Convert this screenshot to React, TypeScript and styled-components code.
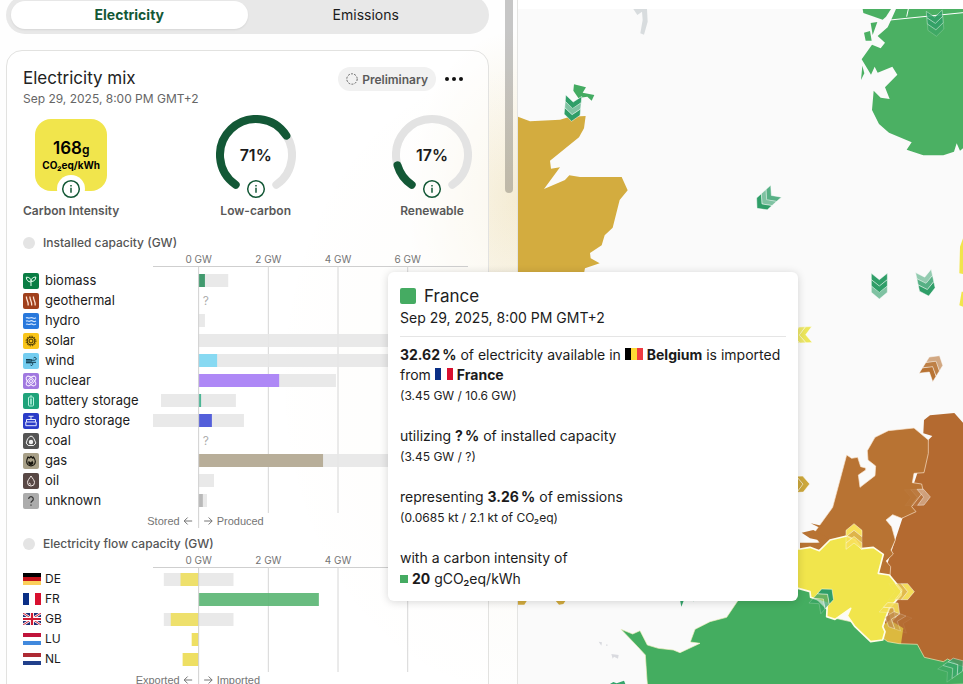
import React, { useState } from "react";
import styled, { createGlobalStyle } from "styled-components";

const GlobalStyle = createGlobalStyle`
  * { box-sizing: border-box; }
  body {
    margin: 0;
    background: #fff;
    color: #1b1b1b;
    font-family: Inter, "Liberation Sans", sans-serif;
    font-size: 14px;
  }
  button { font: inherit; color: inherit; border: 0; padding: 0; background: none; cursor: pointer; }
  p, h1, h2, ul { margin: 0; padding: 0; }
`;

const GREEN = "#135836";

/* ---------- layout ---------- */

const Page = styled.div`
  display: flex;
  height: 100vh;
  overflow: hidden;
`;

const Panel = styled.aside`
  flex: none;
  width: clamp(360px, 54vw, 518px);
  display: flex;
  border-right: 1px solid #e4e4e2;
  padding-right: 4px;
  background:
    radial-gradient(110px 170px at 100% 200px, rgba(211, 172, 63, 0.2), rgba(211, 172, 63, 0)),
    radial-gradient(240px 320px at 100% 380px, rgba(211, 172, 63, 0.06), rgba(211, 172, 63, 0)),
    #fefefe;
`;

const PanelContent = styled.div`
  flex: 1;
  min-width: 0;
  display: flex;
  flex-direction: column;
  gap: 16px;
  margin-top: -4px;
  padding: 0 16px 0 6px;
`;

const ScrollThumb = styled.div`
  flex: none;
  width: 8px;
  height: 193px;
  border-radius: 0 0 4px 4px;
  background: rgba(0, 0, 0, 0.22);
`;

const Tabs = styled.div`
  flex: none;
  display: grid;
  grid-template-columns: 1fr 1fr;
  padding: 5px;
  border-radius: 19px;
  background: #e8e8e8;
`;

const Tab = styled.button<{ $active: boolean }>`
  height: 28px;
  padding-bottom: 2px;
  border-radius: 14px;
  font-size: 14px;
  font-weight: ${(p) => (p.$active ? 700 : 400)};
  color: ${(p) => (p.$active ? GREEN : "#1b1b1b")};
  background: ${(p) => (p.$active ? "#fff" : "transparent")};
  box-shadow: ${(p) => (p.$active ? "0 1px 2px rgba(0, 0, 0, 0.08)" : "none")};
`;

const Card = styled.section`
  flex: none;
  padding: 16px;
  border: 1px solid #e2e2e0;
  border-radius: 16px;
  background: rgba(255, 255, 255, 0.6);
`;

const CardHeader = styled.header`
  display: flex;
  align-items: center;
`;

const CardTitle = styled.h1`
  flex: 1;
  padding-bottom: 2px;
  font-size: 17px;
  line-height: 22px;
  font-weight: 400;
  color: #222;
`;

const Status = styled.span`
  display: flex;
  align-items: center;
  gap: 4px;
  height: 24px;
  padding: 0 8px;
  border-radius: 12px;
  background: #f1f1f1;
  color: #5a5a5a;
  font-size: 12px;
  font-weight: 600;
`;

const MoreButton = styled.button`
  display: grid;
  place-items: center;
  width: 36px;
  height: 24px;
`;

const CardDate = styled.p`
  font-size: 12px;
  line-height: 16px;
  color: #666;
`;

/* ---------- gauges ---------- */

const Metrics = styled.div`
  display: flex;
  justify-content: space-between;
  margin-top: 8px;
`;

const Metric = styled.div`
  display: flex;
  flex-direction: column;
  align-items: center;
  gap: 8px;
`;

const Dial = styled.div`
  display: grid;
  place-items: center;
  width: 80px;
  height: 80px;
  > * { grid-area: 1 / 1; }
`;

const DialValue = styled.span`
  font-size: 16px;
  font-weight: 600;
`;

const IntensitySquare = styled.div`
  display: flex;
  flex-direction: column;
  align-items: center;
  justify-content: center;
  width: 72px;
  height: 72px;
  border-radius: 16px;
  background: #f1e54c;
  color: #000;
  font-size: 10px;
  line-height: 12px;
  font-weight: 700;
  white-space: nowrap;
`;

const IntensityValue = styled.span`
  font-size: 17px;
  line-height: 18px;
  font-weight: 600;
  small { font-size: 12px; }
`;

const InfoButton = styled.button<{ $ring?: boolean }>`
  align-self: end;
  display: grid;
  place-items: center;
  width: 28px;
  height: 28px;
  margin-bottom: -8px;
  border-radius: 50%;
  background: ${(p) => (p.$ring ? "#fff" : "transparent")};
`;

const MetricLabel = styled.span`
  font-size: 12px;
  line-height: 16px;
  font-weight: 600;
  color: #585858;
  white-space: nowrap;
  text-align: center;
`;

const MetricLabelSlot = styled(MetricLabel)`
  display: flex;
  justify-content: center;
  width: 80px;
`;

/* ---------- charts ---------- */

const ChartHeading = styled.h2<{ $gap: number }>`
  display: flex;
  align-items: center;
  gap: 8px;
  margin-top: ${(p) => p.$gap}px;
  font-size: 12px;
  line-height: 16px;
  font-weight: 500;
  color: #555;
`;

const Dot = styled.span`
  width: 12px;
  height: 12px;
  border-radius: 50%;
  background: #e4e4e4;
`;

const ChartBody = styled.div`
  display: grid;
  grid-template-columns: 130px minmax(0, 1fr);
  padding-right: 4px;
`;

const RowLabels = styled.ul<{ $top: number }>`
  padding-top: ${(p) => p.$top}px;
  list-style: none;
`;

const RowLabel = styled.li<{ $flag: boolean }>`
  display: flex;
  align-items: center;
  gap: ${(p) => (p.$flag ? 4 : 6)}px;
  height: 20px;
  font-size: ${(p) => (p.$flag ? 12 : 13)}px;
  line-height: 18px;
  white-space: nowrap;
`;

const RowText = styled.span`
  padding-bottom: 2px;
`;

const Plot = styled.svg`
  display: block;
  width: 100%;
  overflow: visible;
  fill: #757575;
  font-size: 10px;
`;

const Direction = styled.text`
  font-family: "Liberation Sans", sans-serif;
  font-size: 11px;
`;

const FlagBox = styled.svg<{ $inline?: boolean }>`
  flex: none;
  width: 18px;
  height: 12px;
  ${(p) => (p.$inline ? "margin-right: 4px;" : "margin-bottom: 3px;")}
`;

/* ---------- map + tooltip ---------- */

const MapArea = styled.main`
  flex: 1;
  min-width: 0;
  margin-top: 9px;
  background: #fafafa;
`;

const MapSvg = styled.svg`
  display: block;
  width: 100%;
  height: 100%;
`;

const Tooltip = styled.div`
  position: absolute;
  left: 388px;
  top: 272px;
  width: 410px;
  padding: 12px;
  border-radius: 6px;
  background: #fff;
  box-shadow: 0 1px 8px rgba(0, 0, 0, 0.16);
  line-height: 20px;
`;

const TooltipTitle = styled.h2`
  display: flex;
  align-items: center;
  gap: 8px;
  font-size: 17px;
  line-height: 24px;
  font-weight: 400;
  color: #222;
`;

const Swatch = styled.span<{ $size: number }>`
  display: inline-block;
  width: ${(p) => p.$size}px;
  height: ${(p) => p.$size}px;
  border-radius: ${(p) => (p.$size > 10 ? 2 : 0)}px;
  background: #45ab62;
`;

const Divider = styled.hr`
  margin: 8px 0;
  border: 0;
  border-top: 1px solid #e5e5e5;
`;

const Detail = styled.p`
  margin-bottom: 20px;
  font-size: 12px;
  line-height: 21px;
  color: #222;
`;

const IntensityLine = styled.p`
  display: flex;
  align-items: center;
  gap: 4px;
  line-height: 21px;
`;

/* ---------- icons ---------- */

type IconName =
  | "biomass" | "geothermal" | "hydro" | "solar" | "wind" | "nuclear"
  | "battery" | "dam" | "coal" | "gas" | "oil" | "unknown";

const iconArt: Record<IconName, { bg: string; fg: string; art: React.ReactNode }> = {
  biomass: {
    bg: "#0a7d44", fg: "#e9fff2",
    art: <path d="M8 13V8.5M8 9C5 9 3.3 7 3.3 4.2 6.2 4 8 5.7 8 8M8 8.5C8 5.7 10 4 12.8 4 12.8 7 11 8.5 8 8.5" />,
  },
  geothermal: {
    bg: "#a0401c", fg: "#ffe3d3",
    art: <path d="M3.5 3.500C2.8 6 5.7 8 5.2 12.500M7 3.500C6.3 6 9.2 8 8.7 12.500M10.500 3.500C9.800 6 12.700 8 12.200 12.500" strokeWidth="1.300" />,
  },
  hydro: {
    bg: "#2878dc", fg: "#cfe4ff",
    art: <path d="M3 5C4.300 3.800 5.300 5.600 6.600 5S9 4.300 10 5s2 .3 3-.3M3 8.200C4.300 7 5.300 8.800 6.600 8.200s2.400-.7 3.400 0 2 .3 3-.3M3 11.400c1.300-1.200 2.300.6 3.600 0s2.400-.7 3.400 0 2 .3 3-.3" strokeWidth="1.200" />,
  },
  solar: {
    bg: "#f9c51b", fg: "#3a2c00",
    art: (
      <>
        <circle cx="8" cy="8" r="2" />
        <circle cx="8" cy="8" r="3.900" />
        <circle cx="8" cy="8" r="4.900" strokeDasharray="1.300 1.265" />
      </>
    ),
  },
  wind: {
    bg: "#74cdf0", fg: "#123a4b",
    art: (
      <>
        <path d="M3 6h6v4H3z" fill="#2f6f8a" stroke="none" />
        <path d="M3 6.500h4.500M8 7.200h3.800a1.400 1.400 0 1 0-1.200-2.200M9 9.300h4M3 9.800h5.500a1.300 1.300 0 1 1-1 2.200" />
      </>
    ),
  },
  nuclear: {
    bg: "#a078e0", fg: "#f6eeff",
    art: (
      <>
        <circle cx="8" cy="8" r="1.500" />
        <ellipse cx="8" cy="8" rx="6" ry="2.800" transform="rotate(45 8 8)" />
        <ellipse cx="8" cy="8" rx="6" ry="2.800" transform="rotate(-45 8 8)" />
      </>
    ),
  },
  battery: {
    bg: "#1fa37a", fg: "#b9f2df",
    art: (
      <>
        <rect x="5.500" y="4" width="5" height="9" rx="1" />
        <path d="M7 3h2" />
        <path d="M7 5.500h2v6H7z" fill="#8fe0c6" stroke="none" />
      </>
    ),
  },
  dam: {
    bg: "#2b3cc8", fg: "#e5e9ff",
    art: <path d="M5.500 3.300h5M8 3.300V6M3.500 9V6.500h9V9M2.800 9h10.400v3.700H2.800z" />,
  },
  coal: {
    bg: "#545454", fg: "#f2f2f2",
    art: (
      <>
        <path d="M7 3.300 4.500 6 3.200 10l2 2.500h5.500L12.900 10 11 5.800 9.200 3.300z" />
        <circle cx="8" cy="9" r="2.200" fill="#f2f2f2" stroke="none" />
      </>
    ),
  },
  gas: {
    bg: "#a8a088", fg: "#16140d",
    art: (
      <>
        <path d="M5 4C4 6 3.600 7 3.700 8.600A4.300 4.300 0 0 0 12.300 8.600C12.300 7 11.500 5.500 10.500 4L9.500 5 8 3.500 6.500 5z" strokeWidth="1.200" />
        <path d="M5.700 8 8 9.500l1.200-2 1.300 2.500A2.500 2.500 0 0 1 8 12a2.500 2.500 0 0 1-2.300-4z" fill="#16140d" stroke="none" />
      </>
    ),
  },
  oil: {
    bg: "#584845", fg: "#f4ebe8",
    art: (
      <>
        <path d="M8 3C6.500 5.500 4.500 7.300 4.500 9.500a3.500 3.500 0 0 0 7 0C11.500 7.300 9.500 5.500 8 3z" />
        <path d="M6.300 9.700a1.700 1.700 0 0 0 1.600 1.600" />
      </>
    ),
  },
  unknown: {
    bg: "#acacac", fg: "#333",
    art: <path d="M5.700 6a2.300 2.300 0 1 1 3.500 2C8.300 8.600 8 8.900 8 9.800M8 11.500v1.200" strokeWidth="1.200" />,
  },
};

function EnergyIcon({ name }: { name: IconName }) {
  const { bg, fg, art } = iconArt[name];
  return (
    <svg width="16" height="16" viewBox="0 0 16 16" aria-hidden="true">
      <rect width="16" height="16" rx="2" fill={bg} />
      <g fill="none" stroke={fg} strokeWidth="1" strokeLinejoin="round">{art}</g>
    </svg>
  );
}

type Country = "DE" | "FR" | "GB" | "LU" | "NL" | "BE";

const stripes: Record<Exclude<Country, "GB">, { vertical?: boolean; colors: string[] }> = {
  DE: { colors: ["#000", "#c4121a", "#fbcf5a"] },
  FR: { vertical: true, colors: ["#0a2f86", "#fff", "#d8102f"] },
  LU: { colors: ["#c0143a", "#fff", "#4189dd"] },
  NL: { colors: ["#ae2a33", "#fff", "#21408b"] },
  BE: { vertical: true, colors: ["#000", "#fdd835", "#ef3b41"] },
};

function Flag({ code, inline }: { code: Country; inline?: boolean }) {
  return (
    <FlagBox viewBox="0 0 18 12" $inline={inline} role="img" aria-label={code}>
      {code === "GB" ? (
        <>
          <path fill="#1f2f76" d="M0 0h18v12H0z" />
          <path stroke="#fff" strokeWidth="2.400" d="M0 0l18 12M18 0 0 12" />
          <path stroke="#cf1b33" strokeWidth="1" d="M0 0l18 12M18 0 0 12" />
          <path stroke="#fff" strokeWidth="4" d="M9 0v12M0 6h18" />
          <path stroke="#cf1b33" strokeWidth="2.200" d="M9 0v12M0 6h18" />
        </>
      ) : (
        stripes[code].colors.map((c, i) =>
          stripes[code].vertical ? (
            <rect key={i} x={i * 6} width="6" height="12" fill={c} />
          ) : (
            <rect key={i} y={i * 4} width="18" height="4" fill={c} />
          )
        )
      )}
    </FlagBox>
  );
}

function Info({ label, ring }: { label: string; ring?: boolean }) {
  return (
    <InfoButton $ring={ring} aria-label={`About ${label}`}>
      <svg width="20" height="20" viewBox="0 0 20 20" fill="none" stroke={GREEN} strokeWidth="1.500">
        <circle cx="10" cy="10" r="8.300" />
        <path d="M10 8.800v5M10 6v1.500" />
      </svg>
    </InfoButton>
  );
}

/* ---------- gauge ---------- */

const ARC_START = 28;
const ARC_SPAN = 304;
const CAP = 6.4;

function arc(share: number) {
  const at = (deg: number) => {
    const a = (deg * Math.PI) / 180;
    return `${40 - 36 * Math.sin(a)} ${40 + 36 * Math.cos(a)}`;
  };
  const from = ARC_START + CAP;
  const to = ARC_START + ARC_SPAN * share - CAP;
  return `M${at(from)}A36 36 0 ${to - from > 180 ? 1 : 0} 1 ${at(to)}`;
}

function Gauge({ percent, label }: { percent: number; label: string }) {
  return (
    <Metric>
      <Dial>
        <svg width="80" height="80" fill="none" strokeWidth="8" strokeLinecap="round" aria-hidden="true">
          <path d={arc(1)} stroke="#e3e3e3" />
          <path d={arc(percent / 100)} stroke={GREEN} />
        </svg>
        <DialValue>{percent}%</DialValue>
        <Info label={label} />
      </Dial>
      <MetricLabelSlot>{label}</MetricLabelSlot>
    </Metric>
  );
}

/* ---------- chart ---------- */

type Row = { label: string; icon?: IconName; flag?: Country; color?: string; cap?: [number, number]; value?: number };

const sources: Row[] = [
  { label: "biomass", icon: "biomass", color: "#2f9160", cap: [0, 0.85], value: 0.18 },
  { label: "geothermal", icon: "geothermal" },
  { label: "hydro", icon: "hydro", cap: [0, 0.18] },
  { label: "solar", icon: "solar", cap: [0, 7.7] },
  { label: "wind", icon: "wind", color: "#7cd7f3", cap: [0, 5.6], value: 0.53 },
  { label: "nuclear", icon: "nuclear", color: "#a77df7", cap: [0, 3.94], value: 2.31 },
  { label: "battery storage", icon: "battery", color: "#3bb08c", cap: [-1.08, 1.07], value: 0.07 },
  { label: "hydro storage", icon: "dam", color: "#4450d8", cap: [-1.31, 1.3], value: 0.38 },
  { label: "coal", icon: "coal" },
  { label: "gas", icon: "gas", color: "#b2a790", cap: [0, 6.9], value: 3.57 },
  { label: "oil", icon: "oil", cap: [0, 0.44] },
  { label: "unknown", icon: "unknown", color: "#b4b4b4", cap: [0, 0.24], value: 0.12 },
];

const flows: Row[] = [
  { label: "DE", flag: "DE", color: "#eedf5e", cap: [-1, 1], value: -0.52 },
  { label: "FR", flag: "FR", color: "#59b572", value: 3.45 },
  { label: "GB", flag: "GB", color: "#eedf5e", cap: [-1, 1], value: -0.8 },
  { label: "LU", flag: "LU", color: "#ecdc52", value: -0.2 },
  { label: "NL", flag: "NL", color: "#ecdc52", value: -0.46 },
];

const MIN = -1.31;
const SPAN = 9.04;
const pos = (gw: number) => `${((gw - MIN) / SPAN) * 100}%`;
const len = (gw: number) => `${(Math.abs(gw) / SPAN) * 100}%`;

function Chart({ rows, top, minus, plus }: { rows: Row[]; top: number; minus: string; plus: string }) {
  const end = top + rows.length * 20;
  return (
    <ChartBody>
      <RowLabels $top={top}>
        {rows.map((r) => (
          <RowLabel key={r.label} $flag={!!r.flag}>
            {r.icon && <EnergyIcon name={r.icon} />}
            {r.flag && <Flag code={r.flag} />}
            <RowText>{r.label}</RowText>
          </RowLabel>
        ))}
      </RowLabels>
      <Plot height={end + 17}>
        <line x1="0" x2="100%" y1="15.500" y2="15.500" stroke="#cfcfcf" />
        {[0, 2, 4, 6].map((t) => (
          <text key={t} x={pos(t)} y="12" textAnchor="middle">{t} GW</text>
        ))}
        {[2, 4, 6].map((t) => (
          <line key={t} x1={pos(t)} x2={pos(t)} y1="15" y2={end + 2} stroke="#d6d6d6" />
        ))}
        {rows.map((r, i) => {
          const y = top + i * 20 + 3;
          return (
            <g key={r.label} fillOpacity="0.9">
              {r.cap && <rect x={pos(r.cap[0])} y={y} width={len(r.cap[1] - r.cap[0])} height="13" fill="#e7e7e7" />}
              {r.value !== undefined && (
                <rect x={pos(Math.min(0, r.value))} y={y} width={len(r.value)} height="13" fill={r.color} />
              )}
              {!r.cap && r.value === undefined && (
                <text x={pos(0)} dx="4" y={y + 11} fontSize="12" fill="#a5a5a5">?</text>
              )}
            </g>
          );
        })}
        <line x1={pos(0)} x2={pos(0)} y1="15" y2={end + 17} stroke="#d0d0d0" />
        <Direction x={pos(0)} dx="-19" y={end + 14} textAnchor="end">{minus}</Direction>
        <Direction x={pos(0)} dx="18" y={end + 14}>{plus}</Direction>
        <svg x={pos(0)} y={end + 10} overflow="visible" fill="none" stroke="#757575">
          <path d="M-6.500 0h-8M-11-3.500l-3.500 3.500 3.500 3.500M5.500 0h8M10-3.500l3.500 3.500-3.500 3.500" />
        </svg>
      </Plot>
    </ChartBody>
  );
}

/* ---------- map ---------- */

type FlowArrow = { x: number; y: number; turn: number; color: string; fade?: [number, number, number] };

const flowArrows: FlowArrow[] = [
  { x: 1718, y: 325, turn: 5, color: "#2f9e68", fade: [1, 0.6, 1] },
  { x: 2806, y: 70, turn: -5, color: "#2f9e68", fade: [0.8, 0.8, 0.4] },
  { x: 2300, y: 599, turn: 48, color: "#2f9e68", fade: [0.8, 0.6, 1] },
  { x: 2638, y: 858, turn: 0, color: "#2f9e68", fade: [1, 1, 0.6] },
  { x: 2778, y: 850, turn: -12, color: "#2f9e68", fade: [0.5, 0.8, 1] },
  { x: 2398, y: 1005, turn: 88, color: "#ece65a", fade: [1, 0.9, 0.6] },
  { x: 2798, y: 1100, turn: 212, color: "#b87333", fade: [1, 0.9, 0.6] },
  { x: 2390, y: 1453, turn: 268, color: "#cda83c" },
  { x: 2752, y: 1492, turn: 268, color: "#d3a583", fade: [0.05, 0.15, 0.9] },
  { x: 2562, y: 1610, turn: 180, color: "#f8e05a", fade: [0.9, 0.6, 1] },
  { x: 2470, y: 1797, turn: 222, color: "#2f9e68", fade: [0.4, 0.7, 1] },
  { x: 2704, y: 1775, turn: 270, color: "#f4dd5a", fade: [0.1, 0.7, 1] },
  { x: 2668, y: 1838, turn: 222, color: "#f4dd5a", fade: [0, 0.5, 0.9] },
  { x: 2692, y: 1864, turn: 110, color: "#c08a50", fade: [0.1, 0.4, 0.7] },
  { x: 2858, y: 2005, turn: 235, color: "#35a56c", fade: [0.3, 0.6, 0.8] },
];

function WorldMap() {
  return (
    <MapSvg viewBox="1554 27 1335 2025" preserveAspectRatio="xMinYMin slice" role="img" aria-label="Carbon intensity map">
      <g transform="translate(1530 0)">
        <path fill="#d8dcde" d="M370 27l12 18 14-10 2 25-7 40 11 4 11-39-2-38z" />
        <path fill="#d3ac3f" d="M24 350l36 14 90-5 30-9 47-2-5 37-15 27-87 70 3 24 27-4-48 65 63-27 13-14 32 5h125l18 40-24 29-21 83-24 23-9 30-35 23 2 16 27 15-44 15-3 15v80H24z" />
        <path fill="#44ab62" d="M192 253l36 9-10 16 35 7-8 17-13-12-27 4-15-22z" />
        <g fill="#4bb063">
          <path d="M1058 27l2 12 58 20 10-9 15-23z" />
          <path d="M1158 27l-11 25-14 30-30 26 22 20-13 17-26-11-31 44 28 46 11-24 9 18 44-18 15 24-37 38 14 35-27-4-21-21-5 58 21 42 30 26 68 29-15 22 50 17h60l32-11 8-25 10 22 9-7V27z" />
          <path d="M1082 69l20-3-14 39zM1062 98l18-5 5 29h-18zM1057 197l6 23-10 20z" />
        </g>
        <path fill="none" stroke="#fff" strokeWidth="3" d="M1140 60l219-22M1195 27l-5 23" />
      </g>
      <path fill="#f1e54c" d="M2880 740l9-25v107l-11-2zM2885 875h4v45l-11-4z" />
      <path fill="#d3ac3f" d="M1554 1800h28l-9 14h-19zM1665 1800h33l-8 12-13 2z" />
      <g transform="translate(1800 1380)" strokeLinejoin="round">
        <path fill="#b46a30" d="M985-60l12-12-27-8 2-40 18-14 73-7 26 29v800H860l-10-340z" />
        <path fill="#b87333" stroke="#fbe6cf" strokeWidth="2" d="M740-15l15 10 18-3 9 28 15 4v6l-22 15 5 37 45-35 2-29-23-18-2-28 23-40 40-20 77-8 43 36v40l-13 58-30 2-5 28 28 4 5 23-35 45 13 15-43 20-27-11-20 16 17 20 11 40-13 30 7 12-22 21 14 17-4 60h-40l-50-60-60-40-50 12-25-30 17-10-20-30 58-80z" />
        <path fill="#b87333" d="M605 218l35-8 45 25-30 5-25-5zM632 190l36 8-6 7zM600 248h50l35-2-27 34-28-8-30 5z" />
        <path fill="#dcb93f" d="M850 495l20-15 40 25-7 47-55-7z" />
        <path fill="#44ad60" stroke="#f3f0c0" strokeWidth="2" d="M63 508l35 14 22-10 22 43 33 10 45 5 20 8 60-28-29-4 14-38 45-23 50-13 35-52 145-35h60l37 40 50 50 90 20 66 50 34 6 55 2 21 39 57 13 13-8 32 18 30 10 19 20-29 27-950 30-4-42-5-75-23-25z" />
        <path fill="#f1e54c" stroke="#fffde8" strokeWidth="5" d="M560 265l40 2 30-5 28 10 32-32 50-12 25 12 20 26 35-4 30 21-15 57 33 5 37 45-2 15-35 40-13 35-7 20 7 15-7 25-36 5-47-45-23-33 10-22-47 33-25-8 2-40-50-18-2-17-35-10h-35z" />
        <path fill="#35a56c" d="M240 420h12l-8 20zM272 420h16l-8 4zM30 672l10-6 10 4 22-8 4 10z" />
        <path fill="#d9dadf" d="M-4 545l10 2-2 10zM34 582l22 3-2 11-12-6-4 6zM20 552l4 4-6 2z" />
      </g>
      <g stroke="#fff" strokeWidth="2" strokeOpacity="0.7">
        {flowArrows.map((a) => (
          <g key={`${a.x}-${a.y}`} transform={`translate(${a.x} ${a.y}) rotate(${a.turn})`} fill={a.color}>
            {[-19, 0, 19].map((dy, i) => (
              <path
                key={dy}
                transform={`translate(0 ${dy})`}
                opacity={a.fade ? a.fade[i] : 1}
                d="M-24-19L0 0l24-19v19L0 20l-24-20z"
              />
            ))}
          </g>
        ))}
      </g>
    </MapSvg>
  );
}

/* ---------- page ---------- */

export default function App() {
  const [tab, setTab] = useState("Electricity");
  return (
    <>
      <GlobalStyle />
      <Page>
        <Panel>
          <PanelContent>
            <Tabs role="tablist">
              {["Electricity", "Emissions"].map((t) => (
                <Tab key={t} role="tab" aria-selected={t === tab} $active={t === tab} onClick={() => setTab(t)}>
                  {t}
                </Tab>
              ))}
            </Tabs>
            <Card>
              <CardHeader>
                <CardTitle>Electricity mix</CardTitle>
                <Status>
                  <svg width="12" height="12" fill="none" stroke="#666" aria-hidden="true">
                    <circle cx="6" cy="6" r="5.200" strokeDasharray="2 1.267" />
                  </svg>
                  Preliminary
                </Status>
                <MoreButton aria-label="More options">
                  <svg width="20" height="6" fill="#111">
                    <circle cx="3" cy="3" r="2" />
                    <circle cx="10" cy="3" r="2" />
                    <circle cx="17" cy="3" r="2" />
                  </svg>
                </MoreButton>
              </CardHeader>
              <CardDate>Sep 29, 2025, 8:00 PM GMT+2</CardDate>
              <Metrics>
                <Metric>
                  <Dial>
                    <IntensitySquare>
                      <IntensityValue>168<small>g</small></IntensityValue>
                      <span>CO₂eq/kWh</span>
                    </IntensitySquare>
                    <Info label="Carbon Intensity" ring />
                  </Dial>
                  <MetricLabel>Carbon Intensity</MetricLabel>
                </Metric>
                <Gauge percent={71} label="Low-carbon" />
                <Gauge percent={17} label="Renewable" />
              </Metrics>
              <ChartHeading $gap={16}><Dot />Installed capacity (GW)</ChartHeading>
              <Chart rows={sources} top={20} minus="Stored" plus="Produced" />
              <ChartHeading $gap={8}><Dot />Electricity flow capacity (GW)</ChartHeading>
              <Chart rows={flows} top={18} minus="Exported" plus="Imported" />
            </Card>
          </PanelContent>
          <ScrollThumb />
        </Panel>
        <MapArea>
          <WorldMap />
        </MapArea>
      </Page>
      <Tooltip role="tooltip">
        <TooltipTitle><Swatch $size={16} />France</TooltipTitle>
        <p>Sep 29, 2025, 8:00 PM GMT+2</p>
        <Divider />
        <p>
          <b>32.62{"\u202f"}%</b> of electricity available in <Flag code="BE" inline /><b>Belgium</b> is imported
          from <Flag code="FR" inline /><b>France</b>
        </p>
        <Detail>(3.45 GW / 10.6 GW)</Detail>
        <p>utilizing <b>?{"\u202f"}%</b> of installed capacity</p>
        <Detail>(3.45 GW / ?)</Detail>
        <p>representing <b>3.26{"\u202f"}%</b> of emissions</p>
        <Detail>(0.0685 kt / 2.1 kt of CO₂eq)</Detail>
        <p>with a carbon intensity of</p>
        <IntensityLine><Swatch $size={8} /><span><b>20</b> gCO₂eq/kWh</span></IntensityLine>
      </Tooltip>
    </>
  );
}
